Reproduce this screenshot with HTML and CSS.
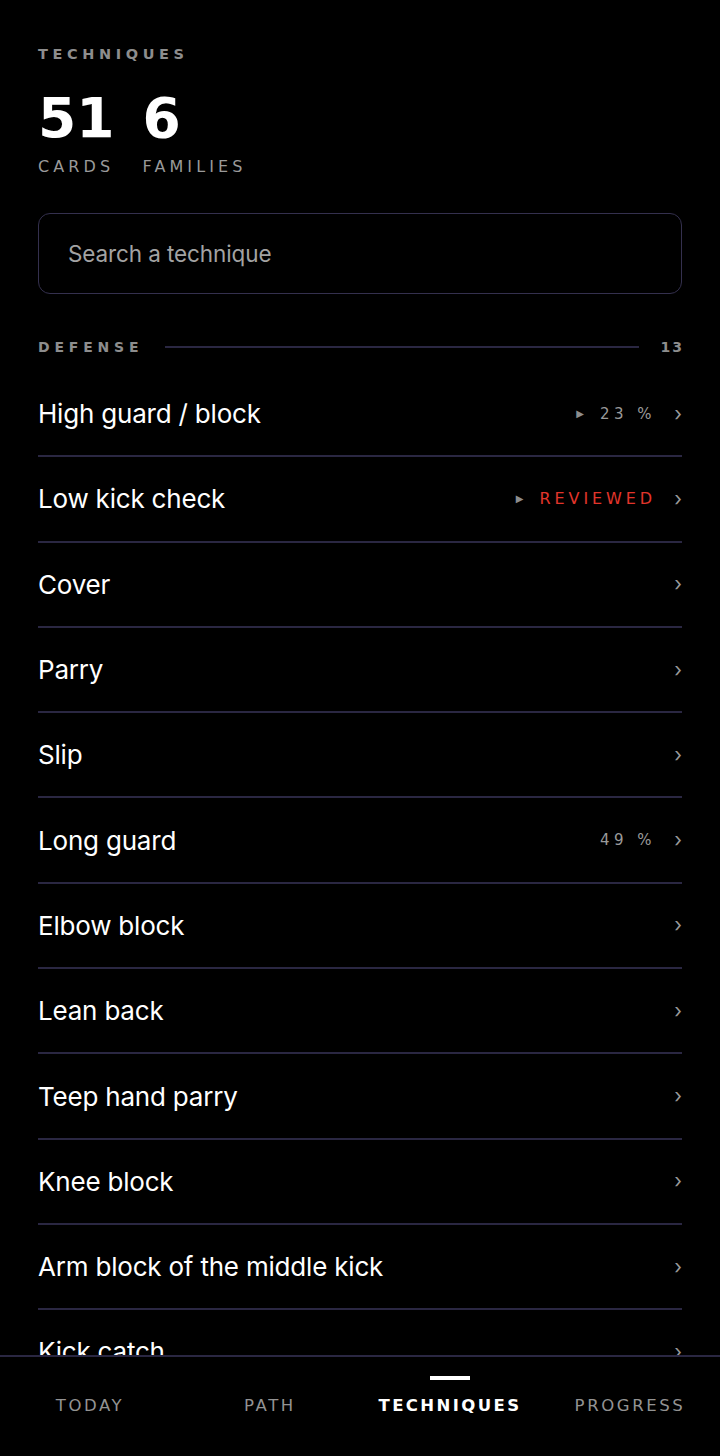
FILE: index.html
```html
<!DOCTYPE html>
<html lang="en">
<head>
<meta charset="utf-8">
<title>Techniques</title>
<link rel="stylesheet" href="styles.css">
</head>
<body>
<div class="app">
  <main class="content">
    <div class="eyebrow">TECHNIQUES</div>
    <div class="stats">
      <div class="stat">
        <div class="stat-num">51</div>
        <div class="stat-label">CARDS</div>
      </div>
      <div class="stat">
        <div class="stat-num">6</div>
        <div class="stat-label">FAMILIES</div>
      </div>
    </div>
    <div class="search">
      <span class="search-placeholder">Search a technique</span>
    </div>
    <div class="section-head">
      <span class="section-name">DEFENSE</span>
      <span class="section-rule"></span>
      <span class="section-count">13</span>
    </div>
    <ul class="list">
      <li class="row"><span class="row-title">High guard / block</span><span class="row-right"><span class="tri">&#9654;</span><span class="meta">23 %</span><span class="chev">&#8250;</span></span></li>
      <li class="row"><span class="row-title">Low kick check</span><span class="row-right"><span class="tri">&#9654;</span><span class="meta reviewed">REVIEWED</span><span class="chev">&#8250;</span></span></li>
      <li class="row"><span class="row-title">Cover</span><span class="row-right"><span class="chev">&#8250;</span></span></li>
      <li class="row"><span class="row-title">Parry</span><span class="row-right"><span class="chev">&#8250;</span></span></li>
      <li class="row"><span class="row-title">Slip</span><span class="row-right"><span class="chev">&#8250;</span></span></li>
      <li class="row"><span class="row-title">Long guard</span><span class="row-right"><span class="meta">49 %</span><span class="chev">&#8250;</span></span></li>
      <li class="row"><span class="row-title">Elbow block</span><span class="row-right"><span class="chev">&#8250;</span></span></li>
      <li class="row"><span class="row-title">Lean back</span><span class="row-right"><span class="chev">&#8250;</span></span></li>
      <li class="row"><span class="row-title">Teep hand parry</span><span class="row-right"><span class="chev">&#8250;</span></span></li>
      <li class="row"><span class="row-title">Knee block</span><span class="row-right"><span class="chev">&#8250;</span></span></li>
      <li class="row"><span class="row-title">Arm block of the middle kick</span><span class="row-right"><span class="chev">&#8250;</span></span></li>
      <li class="row"><span class="row-title">Kick catch</span><span class="row-right"><span class="chev">&#8250;</span></span></li>
    </ul>
  </main>
  <nav class="tabbar">
    <div class="tab">TODAY</div>
    <div class="tab">PATH</div>
    <div class="tab active">TECHNIQUES</div>
    <div class="tab">PROGRESS</div>
  </nav>
</div>
</body>
</html>
```

FILE: styles.css
```css
html, body {
  margin: 0;
  padding: 0;
  background: #000;
}
body {
  font-family: Inter, "Liberation Sans", Arial, sans-serif;
  color: #fff;
}
.app {
  width: 720px;
  height: 1456px;
  display: flex;
  flex-direction: column;
  overflow: hidden;
}
.content {
  flex: 1;
  min-height: 0;
  overflow: hidden;
  padding: 45px 38px 0;
}
.eyebrow {
  font-family: "DejaVu Sans", sans-serif;
  font-weight: bold;
  font-size: 14.5px;
  line-height: 18px;
  letter-spacing: 4.6px;
  color: #8d8d8d;
}
.stats {
  display: flex;
  gap: 28px;
  margin-top: 25px;
}
.stat {
  display: flex;
  flex-direction: column;
}
.stat-num {
  font-family: "DejaVu Sans", sans-serif;
  font-weight: bold;
  font-size: 55px;
  line-height: 60px;
}
.stat-label {
  font-family: "DejaVu Sans", sans-serif;
  font-size: 16px;
  line-height: 20px;
  letter-spacing: 4.1px;
  color: #9a9a9a;
  margin-top: 9px;
}
.search {
  margin-top: 36px;
  height: 79px;
  border: 1px solid #34304e;
  border-radius: 12px;
  display: flex;
  align-items: center;
  padding: 0 29px;
}
.search-placeholder {
  font-size: 22.5px;
  color: #a3a3a3;
  letter-spacing: -0.1px;
}
.section-head {
  display: flex;
  align-items: center;
  gap: 22px;
  margin-top: 42px;
  height: 22px;
}
.section-name, .section-count {
  font-family: "DejaVu Sans", sans-serif;
  font-weight: bold;
  font-size: 14px;
  letter-spacing: 4.8px;
  color: #8d8d8d;
}
.section-count {
  letter-spacing: 2px;
  margin-right: -2px;
}
.section-rule {
  flex: 1;
  height: 2px;
  background: #2a2742;
}
.list {
  list-style: none;
  margin: 14px 0 0;
  padding: 0;
}
.row {
  height: 83.3px;
  border-bottom: 2px solid #2a2742;
  display: flex;
  align-items: center;
  justify-content: space-between;
}
.row-title {
  font-size: 26px;
  letter-spacing: -0.2px;
  color: #fff;
}
.row-right {
  display: flex;
  align-items: center;
}
.tri {
  font-family: "DejaVu Sans", sans-serif;
  font-size: 10px;
  color: #8d8d8d;
  margin-right: 16px;
}
.meta {
  font-family: "DejaVu Sans", sans-serif;
  font-size: 15px;
  letter-spacing: 4.5px;
  color: #9a9a9a;
  margin-right: 18px;
}
.meta.reviewed {
  color: #e2352b;
  letter-spacing: 3.9px;
  font-size: 16px;
}
.chev {
  font-size: 20px;
  color: #9a9a9a;
  width: 8px;
  text-align: right;
}
.tabbar {
  flex: none;
  height: 99px;
  border-top: 2px solid #2a2742;
  display: grid;
  grid-template-columns: repeat(4, 1fr);
  background: #000;
}
.tab {
  position: relative;
  display: flex;
  align-items: flex-start;
  justify-content: center;
  padding-top: 39px;
  font-family: "DejaVu Sans", sans-serif;
  font-size: 16.5px;
  letter-spacing: 2.6px;
  color: #939393;
}
.tab.active {
  color: #fff;
  font-weight: bold;
  letter-spacing: 2.4px;
}
.tab.active::before {
  content: "";
  position: absolute;
  top: 19px;
  left: 50%;
  width: 40px;
  height: 4px;
  margin-left: -20px;
  background: #fff;
}
```
